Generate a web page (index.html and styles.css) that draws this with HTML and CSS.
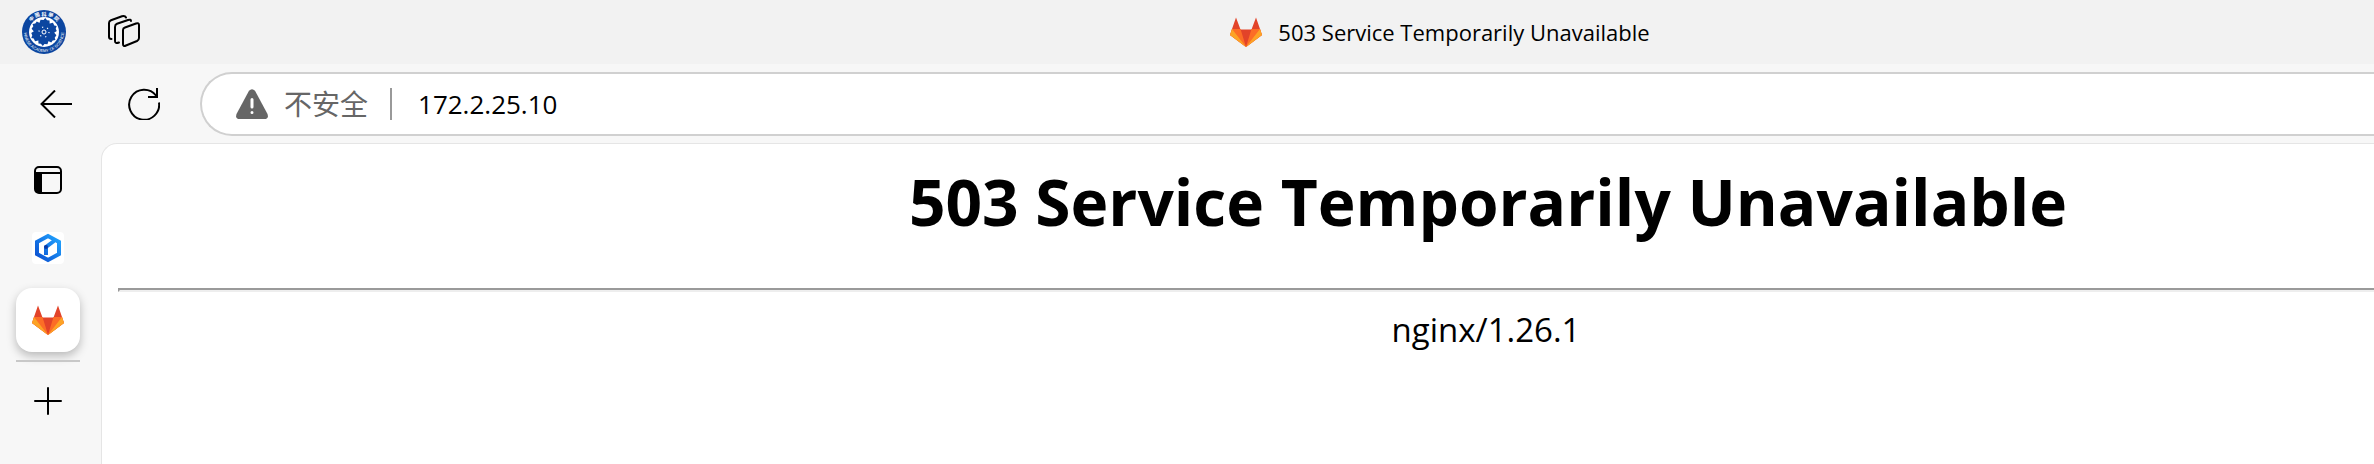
FILE: index.html
```html
<!DOCTYPE html>
<html lang="zh-CN">

<head>
    <meta charset="UTF-8">
    <meta name="viewport" content="width=device-width, initial-scale=1.0">
    <title>503 Service Temporarily Unavailable</title>
    <link rel="stylesheet" href="styles.css">
</head>

<body>
    <svg class="defs" aria-hidden="true">
        <symbol id="fox" viewBox="0 0 32 30">
            <path fill="#e24329" d="M6 0.500L10.500 12.500H21.500L26 0.500L30 12L32 18L16 30L0 18L2 12Z" />
            <path fill="#fc6d26" d="M2 12H10.500L16 30L0 18Z M30 12H21.500L16 30L32 18Z" />
            <path fill="#fca326" d="M2 12L0 18L16 30Z M30 12L32 18L16 30Z" />
        </symbol>
    </svg>

    <div class="window">
        <header class="titlebar">
            <button class="icon-btn profile" aria-label="Profile">
                <svg width="44" height="44" viewBox="-22 -22 44 44">
                    <circle r="22" fill="#0c46a0" />
                    <circle r="15" fill="#fff" />
                    <g fill="#0c46a0" transform="rotate(5)">
                        <path id="petal" d="M-2 0L-5.500 -8L-4.500 -12L-1.500 -12L0 -14L2 -12L4.500 -12L5 -8L2 0Z" />
                        <use href="#petal" transform="rotate(60)" />
                        <use href="#petal" transform="rotate(120)" />
                        <use href="#petal" transform="rotate(180)" />
                        <use href="#petal" transform="rotate(240)" />
                        <use href="#petal" transform="rotate(300)" />
                    </g>
                    <circle r="2" fill="none" stroke="#fff" stroke-width="1" />
                    <circle r="5" fill="none" stroke="#fff" stroke-width="1.200" stroke-dasharray="1.200 4.036" />
                    <path id="arc-top" d="M-16.500 0A16.500 16.500 0 0 1 16.500 0" fill="none" />
                    <path id="arc-bottom" d="M-20 0A20 20 0 0 0 20 0" fill="none" />
                    <text class="seal-cn"><textPath href="#arc-top" startOffset="50%">中 國 科 學 院</textPath></text>
                    <text class="seal-en"><textPath href="#arc-bottom" startOffset="50%">CHINESE ACADEMY OF SCIENCES</textPath></text>
                </svg>
            </button>
            <button class="icon-btn workspaces" aria-label="Workspaces">
                <svg width="34" height="34" viewBox="0 0 34 34" fill="none" stroke="#000" stroke-width="2" stroke-linejoin="round" stroke-linecap="round">
                    <path d="M18 12.500L29 8.500Q32 7.500 32 10V23Q32 25 30 26L19 30.500Q16 32 16 29V15Q16 13.200 18 12.500Z" />
                    <path d="M12 27.500Q8 29 8 26V12Q8 9.500 10 8.700L21 5Q24 4 24 6" />
                    <path d="M4.500 24Q2 24 2 22V8Q2 6 4 5.200L15 1.300Q18 0.500 19 2.500" />
                </svg>
            </button>
            <div class="title">
                <svg width="32" height="30"><use href="#fox" /></svg>
                <span>503 Service Temporarily Unavailable</span>
            </div>
        </header>

        <div class="toolbar">
            <button class="icon-btn nav" aria-label="Back">
                <svg width="32" height="28" viewBox="0 0 32 28" fill="none" stroke="#000" stroke-width="2">
                    <path d="M32 14H1M15 0.500L1.500 14L15 27.500" />
                </svg>
            </button>
            <button class="icon-btn nav" aria-label="Refresh">
                <svg width="32" height="32" viewBox="0 0 32 32" fill="none" stroke="#000" stroke-width="2">
                    <path d="M31 14.500A15 15 0 1 1 28 7.500L29 9M29 0V9H20" />
                </svg>
            </button>
            <form class="address">
                <button type="button" class="icon-btn security">
                    <svg width="32" height="30" viewBox="0 0 32 30">
                        <path fill="#666" d="M13 1.800Q16 -1.500 19 1.800L31.500 25Q33 30 28.500 30H3.500Q-1 30 0.500 25Z" />
                        <path stroke="#fff" stroke-width="3" stroke-linecap="round" d="M16 10.500V18M16 23.500V23.600" />
                    </svg>
                    <span>不安全</span>
                </button>
                <input class="url" type="text" aria-label="Address" value="172.2.25.10">
            </form>
        </div>

        <div class="content">
            <nav class="sidebar">
                <button class="tab" aria-label="Tab actions">
                    <svg width="28" height="28" viewBox="0 0 28 28">
                        <rect x="1" y="1" width="26" height="26" rx="4" fill="none" stroke="#000" stroke-width="2" />
                        <path d="M1 6H27V8H8V27H4Q1 27 1 24Z" />
                    </svg>
                </button>
                <button class="tab" aria-label="Cube">
                    <svg width="32" height="32" viewBox="0 0 32 32">
                        <defs>
                            <linearGradient id="cube" x1="1" y1="0" x2="0" y2="1">
                                <stop offset="0" stop-color="#21a5ff" />
                                <stop offset="1" stop-color="#0b4fd0" />
                            </linearGradient>
                        </defs>
                        <rect width="32" height="32" rx="4" fill="#fff" />
                        <path fill="none" stroke="url(#cube)" stroke-width="4" d="M16 4L27 10V22L16 28L5 22V10ZM22 9L14 15V23" />
                        <circle cx="14" cy="15" r="2" fill="#0a3aa8" />
                    </svg>
                </button>
                <button class="tab active" aria-label="503 Service Temporarily Unavailable">
                    <svg width="32" height="30"><use href="#fox" /></svg>
                </button>
                <button class="tab new-tab" aria-label="New tab">
                    <svg width="28" height="28" viewBox="0 0 28 28" stroke="#000" stroke-width="2" stroke-linecap="round">
                        <path d="M14 1V27M1 14H27" />
                    </svg>
                </button>
            </nav>
            <main class="page">
                <h1>503 Service Temporarily Unavailable</h1>
                <hr>
                <p>nginx/1.26.1</p>
            </main>
        </div>
    </div>
</body>

</html>
```
FILE: styles.css
```css
* {
    box-sizing: border-box;
}

body {
    margin: 0;
    background-color: #f7f7f7;
    color: #000;
    font-family: "Open Sans", "Noto Sans CJK SC", sans-serif;
}

.window {
    display: flex;
    flex-direction: column;
    min-height: 100vh;
}

.defs {
    display: none;
}

svg {
    display: block;
    flex: none;
}

.icon-btn,
.tab {
    display: flex;
    align-items: center;
    justify-content: center;
    padding: 0;
    border: none;
    background: none;
    font: inherit;
}

.titlebar {
    display: grid;
    grid-template-columns: 64px 96px 1fr;
    align-items: center;
    height: 64px;
    padding-left: 12px;
    background-color: #f2f2f2;
}

.title {
    display: flex;
    align-items: center;
    justify-content: center;
    gap: 16px;
    padding-left: 334px;
    font-size: 22px;
    line-height: 32px;
}

.seal-cn,
.seal-en {
    fill: #fff;
    text-anchor: middle;
    font-family: "Noto Sans CJK TC", sans-serif;
    font-weight: bold;
    font-size: 5px;
}

.seal-en {
    font-family: "Liberation Sans", sans-serif;
    font-size: 4px;
    font-weight: normal;
}

.toolbar {
    display: flex;
    height: 79px;
    padding: 8px 0 0 12px;
}

.nav {
    width: 88px;
    height: 64px;
}

.address {
    display: flex;
    flex: 1;
    align-items: center;
    height: 64px;
    margin-left: 12px;
    padding-left: 34px;
    border: 2px solid #d0d0d0;
    border-right: none;
    border-radius: 32px 0 0 32px;
    background-color: #fff;
}

.security {
    gap: 16px;
    color: #666;
    font-size: 28px;
    line-height: 32px;
}

.url {
    flex: 1;
    height: 32px;
    margin-left: 22px;
    padding: 0 0 0 26px;
    border: none;
    border-left: 2px solid #999;
    outline: none;
    background: none;
    color: #000;
    font-family: inherit;
    font-size: 26px;
}

.content {
    display: flex;
    flex: 1;
}

.sidebar {
    display: flex;
    flex-direction: column;
    gap: 4px;
    width: 101px;
    padding: 5px 16px;
}

.tab {
    width: 64px;
    height: 64px;
    border-radius: 16px;
}

.tab.active {
    margin: 4px 0;
    background-color: #fff;
    box-shadow: 0 4px 10px rgba(0, 0, 0, 0.25);
}

.new-tab {
    height: 80px;
    border-top: 2px solid #c8c8c8;
    border-radius: 0;
}

.page {
    flex: 1;
    padding: 16px 0 0 16px;
    border: 1px solid #e5e5e5;
    border-width: 1px 0 0 1px;
    border-radius: 16px 0 0 0;
    background-color: #fff;
    text-align: center;
}

h1 {
    margin: 0 0 44px;
    padding-left: 484px;
    font-size: 64px;
    line-height: 84px;
}

hr {
    margin: 0 0 16px;
    border: 2px solid #9a9a9a;
    border-right: none;
    border-bottom-color: #eee;
}

p {
    margin: 0;
    padding-left: 480px;
    font-size: 33px;
    line-height: 44px;
}
```
